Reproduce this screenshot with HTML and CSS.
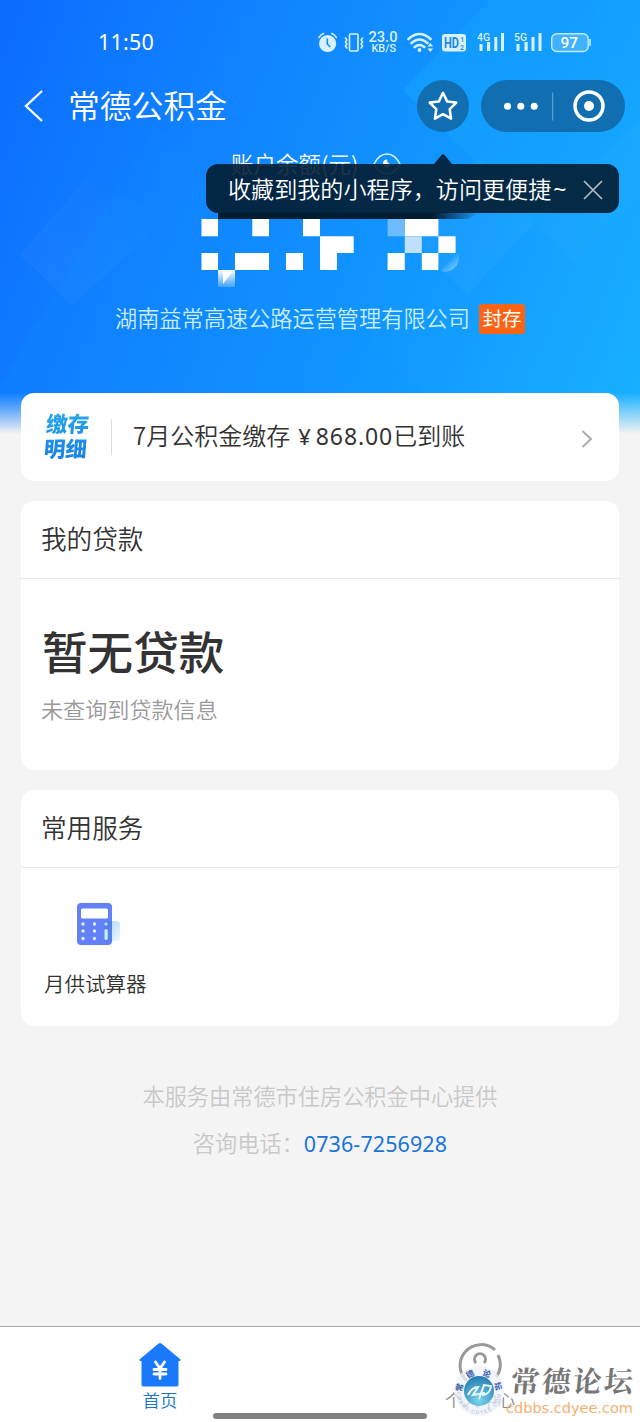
FILE: index.html
```html
<!DOCTYPE html>
<html lang="zh-CN">
<head>
<meta charset="utf-8">
<title>常德公积金</title>
<link rel="stylesheet" href="styles.css">
</head>
<body>
<div class="page">
  <header class="hero">
    <svg class="hero-art" width="640" height="440" viewBox="0 0 640 440">
      <defs>
        <linearGradient id="fold" x1="0" y1="1" x2="1" y2="0"><stop offset="0" stop-color="#fff" stop-opacity=".045"/><stop offset="1" stop-color="#fff" stop-opacity=".01"/></linearGradient>
        <linearGradient id="sheet" x1="0" y1="0" x2="1" y2="0"><stop offset="0" stop-color="#18b0ff" stop-opacity=".35"/><stop offset="1" stop-color="#18b0ff" stop-opacity="0"/></linearGradient>
      </defs>
      <path d="M85 180 20 255 72 305 150 235 150 210Z" fill="url(#fold)"/>
      <path d="M155 125 0 385V440H470Z" fill="#1494ff" opacity=".12"/>
      <path d="M490 0 403 90 535 222 640 120V0Z" fill="url(#sheet)"/>
      <path d="M370 195 467 295 535 222 480 160Z" fill="#fff" opacity=".03"/>
      <path d="M535 222 575 262 640 195V120Z" fill="#fff" opacity=".02"/>
    </svg>

    <div class="status">
      <span class="clock">11:50</span>
      <svg class="status-icons" width="276" height="28" viewBox="316 28 276 28">
        <g fill="none" stroke="#d8f1ff" stroke-width="1.6" stroke-linecap="round">
          <circle cx="327.600" cy="43.500" r="8.600" fill="#d8f1ff" stroke="none"/>
          <path d="M319 37.500q1.500-3 4.500-4M336.300 37.500q-1.500-3-4.500-4"/>
          <path d="M327.300 39v5l2.500 2.500" stroke="#168aff"/>
          <rect x="349.500" y="34" width="8.500" height="17" rx="1"/>
          <path d="M345.500 38l1.300 2-1.300 2 1.300 2-1.300 2 1.300 2M362.500 38l-1.300 2 1.300 2-1.300 2 1.300 2-1.300 2"/>
          <path d="M408.500 39Q419.500 29 430.500 39M411.500 43Q419.500 36 427.500 43M414.700 47Q419.500 43 424.300 47" stroke-width="2.600"/>
        </g>
        <g fill="#d8f1ff">
          <circle cx="419.500" cy="50" r="1.900"/>
          <path d="M427.500 46.500l2.800-3.500 2.800 3.500zM427.500 48.500l2.800 3.500 2.800-3.500z"/>
          <rect x="442" y="34" width="24" height="17.500" rx="3"/>
          <path d="M479.500 44h3v7h-3zM487 42h3.200v9H487zM494.300 37h3v14h-3zM501 33h3v18h-3zM516.500 44h3v7h-3zM524.500 42h3.200v9h-3.200zM531.500 37h3v14h-3zM538.500 33h3v18h-3z"/>
        </g>
        <g class="status-text" fill="#d8f1ff">
          <text x="368.500" y="42.300" font-size="14.500" textLength="29" lengthAdjust="spacingAndGlyphs">23.0</text>
          <text x="371.500" y="52" font-size="11" textLength="24.500" lengthAdjust="spacingAndGlyphs">KB/S</text>
          <text x="477" y="41" font-size="11" textLength="13" lengthAdjust="spacingAndGlyphs">4G</text>
          <text x="514" y="41" font-size="11" textLength="13" lengthAdjust="spacingAndGlyphs">5G</text>
          <g fill="#1787ed"><text x="444" y="47.800" font-size="14" font-weight="700" textLength="15" lengthAdjust="spacingAndGlyphs">HD</text>
          <text x="460.300" y="42" font-size="7">1</text><text x="460" y="50" font-size="7">2</text></g>
        </g>
        <rect x="551.700" y="33.700" width="36.500" height="17.800" rx="5" fill="#fff" fill-opacity=".2" stroke="#bfeaff" stroke-width="1.400"/>
        <path d="M590 39v7" stroke="#bfeaff" stroke-width="1.600"/>
        <text class="status-text" x="560.500" y="47.500" font-size="14" fill="#fff" textLength="17.500" lengthAdjust="spacingAndGlyphs">97</text>
      </svg>
    </div>

    <nav class="nav">
      <svg class="back" width="20" height="32" viewBox="0 0 20 32"><path d="M18 1 2 16 18 31" fill="none" stroke="#fff" stroke-width="2.300"/></svg>
      <h1 class="title">常德公积金</h1>
      <span class="star"><svg width="32" height="32" viewBox="0 0 32 32"><path d="M16 2.800l4.100 8.600 9.200 1.200-6.600 6.600 1.400 9.400-8.100-4.400-8.100 4.400 1.400-9.400-6.600-6.600 9.200-1.200z" fill="none" stroke="#fff" stroke-width="2.500" stroke-linejoin="round"/></svg></span>
      <span class="capsule"><svg width="144" height="52" viewBox="0 0 144 52"><g fill="#fff"><circle cx="26.500" cy="26.200" r="3.500"/><circle cx="39.800" cy="26.200" r="3.500"/><circle cx="53.200" cy="26.200" r="3.500"/><circle cx="108" cy="26" r="5"/></g><path d="M71.700 12.500v28" stroke="#67abd9"/><circle cx="108" cy="26" r="14" fill="none" stroke="#fff" stroke-width="3.500"/></svg></span>
    </nav>

    <div class="balance">
      <div class="balance-label"><span>账户余额(元)</span><svg width="28" height="22" viewBox="0 0 28 22"><path d="M1 11Q6 1 14 1t13 10Q22 21 14 21T1 11Z" fill="none" stroke="#d5efff" stroke-width="1.500"/><path d="M14 6.500A4 4 0 1 0 18 11Q14 11 14 6.500Z" fill="#fff"/></svg></div>
      <svg class="amount" width="262" height="70" viewBox="201 218 262 70">
        <defs>
          <linearGradient id="shade" x1="0" y1="0" x2="0" y2="1"><stop offset="0" stop-color="#fff"/><stop offset="1" stop-color="#fff" stop-opacity=".2"/></linearGradient>
          <linearGradient id="rim" x1="0" y1="0" x2="1" y2="1"><stop offset=".45" stop-color="#fff" stop-opacity="0"/><stop offset="1" stop-color="#fff" stop-opacity=".6"/></linearGradient>
        </defs>
        <path d="M438 270V253h21q1 18-15 19z" fill="url(#rim)"/>
        <path fill="#fff" d="M201.500 219H218v17.300h-16.500zM252.300 219H269v17.300h-16.700zM303 219h17v17.300h33.700V253H337v17h-17v-33.700h-17zM404.800 219h33.600v17.300h-33.600zM438.400 236.300h17.200V253h-17.200zM201.500 253H218v17h-16.500zM235 253h34v17h-34zM286 253h17v17h-17zM387.600 253h17.200v17h-17.200zM421.800 253h16.600v17h-16.600z"/>
        <path fill="#6cbcff" d="M387.600 219h17.200v17.300h-17.200z"/>
        <path fill="#bfe1ff" d="M404.800 236.300h17V253h-17z"/>
        <path fill="url(#shade)" d="M218 270h17v17h-17z"/><path d="M223 272h9l-9 12z" fill="#fff"/>
      </svg>
      <div class="company"><span>湖南益常高速公路运营管理有限公司</span><b class="tag">封存</b></div>
    </div>

    <div class="tooltip">
      <svg class="tooltip-bg" width="413" height="66" viewBox="206 154 413 66">
        <defs><linearGradient id="smear" x1="0" x2="1" y1="0" y2="0"><stop offset=".82" stop-color="#031d31"/><stop offset="1" stop-color="#031d31" stop-opacity="0"/></linearGradient></defs>
        <path d="M218 164H434l7.500-9q1.500-1.500 3 0l7.500 9H607a12 12 0 0 1 12 12V201a12 12 0 0 1-12 12H218a12 12 0 0 1-12-12V176a12 12 0 0 1 12-12Z" fill="#02192b" fill-opacity=".88"/>
        <path d="M218 212.500H480L468 219H218Z" fill="url(#smear)"/>
      </svg>
      <span class="tooltip-text">收藏到我的小程序，访问更便捷<span class="tilde">~</span></span>
      <svg class="close" width="20" height="20" viewBox="0 0 20 20"><path d="M1 1l18 18M19 1 1 19" stroke="#b5bcc1" stroke-width="1.700"/></svg>
    </div>
  </header>

  <main class="content">
    <section class="card notice">
      <div class="notice-logo">缴存<br>明细</div>
      <div class="notice-text">7月公积金缴存<span class="yen">¥</span><span class="num">868.00</span>已到账</div>
      <svg class="chevron" width="12" height="20" viewBox="0 0 12 20"><path d="M1.500 2 10 10 1.500 18" fill="none" stroke="#aaa" stroke-width="1.900"/></svg>
    </section>
    <section class="card loan">
      <h2 class="card-title">我的贷款</h2>
      <p class="loan-main">暂无贷款</p>
      <p class="loan-sub">未查询到贷款信息</p>
    </section>
    <section class="card services">
      <h2 class="card-title">常用服务</h2>
      <a class="service">
        <svg width="46" height="44" viewBox="0 0 46 44">
          <defs><linearGradient id="glow" x1="0" x2="1" y1="0" y2="1"><stop offset="0" stop-color="#a9d3fb"/><stop offset="1" stop-color="#eef8ff"/></linearGradient></defs>
          <rect x="27" y="18" width="16" height="20" rx="3" fill="url(#glow)"/>
          <rect x="0" y="0" width="35" height="42" rx="4" fill="#6380f6"/>
          <rect x="27" y="18" width="8" height="20" fill="#5480ec"/>
          <rect x="4" y="5.500" width="27" height="10" rx="1.500" fill="#fff"/>
          <g fill="#e5f0ff"><circle cx="6" cy="21" r="1.700"/><circle cx="17.500" cy="21" r="1.700"/><circle cx="29" cy="21" r="1.700" fill="#a9d8ff"/><circle cx="6" cy="28" r="1.700"/><circle cx="17.500" cy="28" r="1.700"/><circle cx="6" cy="35.500" r="1.700"/><circle cx="17.500" cy="35.500" r="1.700"/><rect x="27.500" y="26" width="3.200" height="11" rx="1.600" fill="#c8ecff"/></g>
        </svg>
        <span>月供试算器</span>
      </a>
    </section>
    <footer class="provider">
      <p>本服务由常德市住房公积金中心提供</p>
      <p>咨询电话：<a class="phone">0736-7256928</a></p>
    </footer>
  </main>

  <nav class="tabbar">
    <a class="tab active">
      <svg width="42" height="44" viewBox="0 0 42 44"><path d="M21 0Q22 0 23 1L41.500 16.500Q42 18 40.500 18H39.500V41.500Q39.500 43.500 37.500 43.500H4.500Q2.500 43.500 2.500 41.500V18H1.500Q0 18 .5 16.500L19 1Q20 0 21 0Z" fill="#1a78fa"/><path d="M16.500 19 21 25.500 25.500 19M15 26.500h12M15 31h12M21 26v9.500" fill="none" stroke="#fff" stroke-width="2.800" stroke-linecap="round"/></svg>
      <span>首页</span>
    </a>
    <a class="tab">
      <svg width="46" height="44" viewBox="0 0 46 44"><path d="M10 38A20.500 20.500 0 1 1 38 7M41 12A20.500 20.500 0 0 1 39 34" fill="none" stroke="#999" stroke-width="3"/><path d="M19 20A5.500 5.500 0 1 1 27 20" fill="none" stroke="#999" stroke-width="3"/></svg>
      <span>个人中心</span>
    </a>
    <i class="home-bar"></i>
    <div class="watermark">
      <svg width="60" height="60" viewBox="0 0 60 60">
        <defs><radialGradient id="globe" cx=".5" cy=".8" r=".8"><stop offset="0" stop-color="#79d6ed"/><stop offset="1" stop-color="#267bb3"/></radialGradient><path id="ring" d="M13 31A17 17 0 0 1 47 31"/><path id="ring-low" d="M8 31A22 22 0 0 0 52 31"/></defs>
        <circle cx="30" cy="30" r="25" fill="#edf2f8" fill-opacity=".75"/>
        <circle cx="30" cy="30" r="15" fill="url(#globe)"/>
        <path d="M19 34q4-8 10-8l-5 8 12-2M30 38l5-14 7 1q-1 9-9 9" fill="none" stroke="#e9fbff" stroke-width="2"/>
        <text class="ring-text" font-size="8" fill="#496bae"><textPath href="#ring" textLength="52">常德论坛</textPath></text>
        <text font-size="5" fill="#a9b8d7" font-family="Liberation Sans, sans-serif"><textPath href="#ring-low" textLength="66">CDBBS.CDYEE.COM</textPath></text>
      </svg>
      <div class="watermark-words"><b>常德论坛</b><span>cdbbs.cdyee.com</span></div>
    </div>
  </nav>
</div>
</body>
</html>
```
FILE: styles.css
```css
* { box-sizing: border-box; margin: 0; padding: 0; }
body {
  font-family: "Noto Sans CJK SC DemiLight", "Noto Sans CJK SC", sans-serif;
  font-weight: 350;
  color: #333;
  background: #f4f4f4;
}
svg { display: block; flex: none; }
.page { position: relative; width: 640px; height: 1422px; display: flex; flex-direction: column; overflow: hidden; }

.hero { position: relative; height: 393px; color: #fff; flex: none; }
.hero::before {
  content: ""; position: absolute; inset: 0 0 auto; height: 436px;
  background: linear-gradient(112deg, #0b6cff 0%, #1080ff 28%, #1196ff 62%, #18b1ff 100%);
  -webkit-mask-image: linear-gradient(#000 393px, transparent 434px);
  mask-image: linear-gradient(#000 393px, transparent 434px);
}
.hero-art { position: absolute; left: 0; top: 0; -webkit-mask-image: linear-gradient(#000 390px, transparent 430px); mask-image: linear-gradient(#000 390px, transparent 430px); }
.status, .nav, .balance { position: relative; }
.status { display: flex; justify-content: space-between; align-items: center; height: 84px; padding: 0 48px 0 98px; }
.clock { font: 400 21.500px/28px "Noto Sans", sans-serif; letter-spacing: .2px; }
.status-text { font-family: Roboto, sans-serif; font-weight: 500; }
.nav { display: flex; align-items: center; height: 44px; padding: 0 15px 0 24px; }
.title { font-size: 31.800px; line-height: 44px; font-weight: inherit; margin-left: 24px; padding-bottom: 4px; }
.star, .capsule { display: flex; align-items: center; justify-content: center; height: 52px; border-radius: 26px; background: #116fb1; }
.star { width: 52px; margin-left: auto; }
.capsule { width: 144px; margin-left: 12px; }

.balance { display: flex; flex-direction: column; padding-top: 20px; }
.balance-label { display: flex; align-items: center; gap: 15px; height: 32px; margin-left: 231px; font-size: 22.500px; line-height: 30px; }
.balance-label span { padding-bottom: 2px; }
.amount { margin: 38px 0 0 201px; }
.company { display: flex; align-items: center; gap: 9px; height: 30px; margin: 16px 0 0 115px; font-size: 22.200px; line-height: 27px; color: #c9edff; }
.company span { padding-bottom: 4px; }
.tag { width: 46px; height: 30px; border-radius: 3px; background: #fa6414; color: #fff; font-size: 19.500px; font-family: "Noto Sans CJK SC", sans-serif; font-weight: 400; line-height: 28px; text-align: center; }

.tooltip { position: absolute; left: 206px; top: 154px; width: 413px; height: 66px; display: flex; align-items: center; padding: 0 16px 0 22px; }
.tooltip-bg { position: absolute; left: 0; top: 0; }
.tooltip-text { position: relative; font-size: 23.100px; line-height: 36px; white-space: nowrap; padding-top: 2px; }
.tilde { font-family: "Noto Sans", sans-serif; font-weight: 400; margin-left: 2px; }
.close { position: relative; margin-left: auto; top: 3px; }

.content { position: relative; display: flex; flex-direction: column; gap: 20px; padding: 0 21px; height: 933px; }
.card { background: #fff; border-radius: 13px; }
.notice { display: flex; align-items: center; height: 88px; padding: 0 26px 0 24px; }
.notice-logo {
  width: 66px; height: 54px; font-family: "Noto Sans CJK SC", sans-serif; font-size: 21.500px; font-weight: 900; line-height: 25px;
  transform: skewX(-5deg);
  background: linear-gradient(#27a8e8, #187ee9); -webkit-background-clip: text; background-clip: text; color: transparent;
}
.notice-text { border-left: 1px solid #ddd; padding: 0 0 3px 21px; font-size: 24px; line-height: 31px; white-space: nowrap; }
.yen, .num { font-family: "Noto Sans", sans-serif; font-weight: 400; }
.yen { margin: 0 5px 0 8px; font-size: 22px; }
.num { font-size: 23px; letter-spacing: .9px; }
.chevron { margin: 3px 0 0 auto; }
.loan { height: 269px; }
.services { height: 236px; }
.card-title { height: 78px; padding-left: 20px; border-bottom: 1px solid #e5e5e5; font-size: 25.600px; line-height: 74px; font-weight: inherit; }
.loan-main { padding: 39px 0 0 21px; font-family: "Noto Sans CJK SC", sans-serif; font-size: 45.600px; line-height: 64px; font-weight: 500; }
.loan-sub { padding: 10px 0 0 20px; font-size: 22.100px; line-height: 32px; color: #999; }
.service { display: flex; flex-direction: column; align-items: flex-start; gap: 23px; padding: 35px 0 0 23px; font-size: 20.500px; line-height: 26px; }
.service svg { margin-left: 33px; }
.provider { padding-top: 34px; text-align: center; font-size: 22.200px; line-height: 30px; color: #c8c8c8; }
.provider p + p { margin-top: 17px; }
.phone { font-family: "Noto Sans", sans-serif; font-weight: 400; font-size: 21.500px; color: #1975d9; letter-spacing: .1px; }

.tabbar { position: relative; display: flex; height: 96px; flex: none; border-top: 1px solid #aaa; background: #fff; }
.tab { width: 320px; display: flex; flex-direction: column; align-items: center; padding-top: 16px; font-size: 17.500px; line-height: 24px; color: #888; }
.tab span { margin-top: 1px; }
.active { color: #1975c8; }
.home-bar { position: absolute; left: 213px; top: 86px; width: 214px; height: 6px; border-radius: 3px; background: #808080; }
.watermark { position: absolute; left: 449px; top: 34px; display: flex; align-items: flex-start; }
.ring-text { font-family: "Noto Sans CJK SC", sans-serif; font-weight: 900; }
.watermark-words { display: flex; flex-direction: column; margin-left: -1px; }
.watermark-words b { font: 700 29px/38px "Noto Serif CJK SC", "Noto Sans CJK SC", serif; letter-spacing: 2px; color: #777; transform: skewX(-5deg); margin-left: 3px; white-space: nowrap; }
.watermark-words span { font: 400 14.500px/18px "DejaVu Sans", sans-serif; color: #f5b070; white-space: nowrap; margin-left: -2px; }
```
